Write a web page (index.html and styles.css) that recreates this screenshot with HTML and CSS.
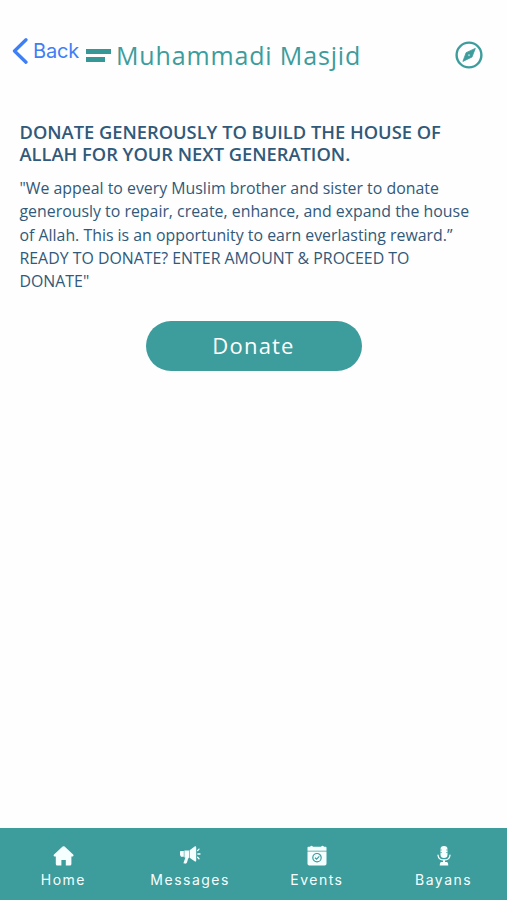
FILE: index.html
```html
<!DOCTYPE html>
<html lang="en">
<head>
  <meta charset="UTF-8">
  <meta name="viewport" content="width=device-width, initial-scale=1.0">
  <title>Donate - Muhammadi Masjid</title>
  <link rel="stylesheet" href="styles.css">
</head>
<body>
  <header class="header">
    <a class="back" href="#">
      <svg class="back-icon" width="16" height="28" viewBox="0 0 16 28"><path d="M14 2.8L2.5 14L14 25.2" fill="none" stroke="currentColor" stroke-width="3.3" stroke-linecap="round" stroke-linejoin="round"/></svg>
      <span class="back-text">Back</span>
    </a>
    <div class="menu"><span class="bar"></span><span class="bar short"></span></div>
    <h1 class="title">Muhammadi Masjid</h1>
    <svg class="compass" width="28" height="28" viewBox="0 0 28 28">
      <circle cx="14" cy="14" r="12.4" fill="none" stroke="currentColor" stroke-width="2.4"/>
      <path fill="currentColor" stroke="currentColor" stroke-width=".8" stroke-linejoin="round" fill-rule="evenodd" d="M20.3 7.4L17 16L7.9 20.4L11.1 11.7ZM14 12.9a1.2 1.2 0 1 0 0 2.4a1.2 1.2 0 1 0 0-2.4Z"/>
    </svg>
  </header>

  <main class="content">
    <h2 class="heading">DONATE GENEROUSLY TO BUILD THE HOUSE OF<br>ALLAH FOR YOUR NEXT GENERATION.</h2>
    <p class="appeal">"We appeal to every Muslim brother and sister to donate<br>generously to repair, create, enhance, and expand the house<br>of Allah. This is an opportunity to earn everlasting reward.”<br>READY TO DONATE? ENTER AMOUNT &amp; PROCEED TO<br>DONATE"</p>
    <button class="donate">Donate</button>
  </main>

  <nav class="tabs">
    <a class="tab" href="#">
      <svg width="22" height="22" viewBox="0 0 22 22"><path fill="currentColor" d="M10.6 1.6Q11.6 .8 12.6 1.6L21.4 9.7Q22 11.2 20.6 11.4H19.4V19Q19.4 20.5 17.9 20.5H13.8V15H9.4V20.5H5.3Q3.8 20.5 3.8 19V11.4H2.6Q1 11.2 1.8 9.7Z"/></svg>
      <span>Home</span>
    </a>
    <a class="tab" href="#">
      <svg width="22" height="22" viewBox="0 0 22 22">
        <path fill="currentColor" d="M1.4 6H4.8V11.7H2L1 10V7ZM5.4 5.4H10V12.5L9 14L8 17.6Q7.6 18.8 6 18.6L4.4 18.2L6.4 12.5H5.4ZM10.6 5.2L16 1.3Q17.2 1 17.2 2.3V15.7Q17.2 16.9 16 16.5L10.6 12.7Z"/>
        <path fill="none" stroke="currentColor" stroke-width="1.3" stroke-linecap="round" d="M18.6 5.6L20 4.1M18.8 9H21M18.6 12.3L20 13.7"/>
      </svg>
      <span>Messages</span>
    </a>
    <a class="tab" href="#">
      <svg width="22" height="22" viewBox="0 0 22 22">
        <path fill="currentColor" d="M1.5 2.5Q1.5 1.7 2.5 1.7H4Q5.5 0 7 1.7H15Q16.5 0 18 1.7H19.5Q20.5 1.7 20.5 2.7V5.7H1.5ZM1.5 6.4H20.5V18.7Q20.5 20.5 18.7 20.5H3.3Q1.5 20.5 1.5 18.7Z"/>
        <circle class="mark" cx="11" cy="12.7" r="4.2"/>
        <path class="mark" d="M9 12.7L10.6 14.2L13.3 11.3"/>
      </svg>
      <span>Events</span>
    </a>
    <a class="tab" href="#">
      <svg width="22" height="22" viewBox="0 0 22 22">
        <path fill="currentColor" d="M7.5 4.2Q7.5 1 11 1T14.5 4.2V9.8Q14.5 13 11 13T7.5 9.8ZM10 15H12V17.1H14Q15.3 17.5 15.3 20.4H6.7Q6.7 17.5 8 17.1H10Z"/>
        <path fill="none" stroke="currentColor" stroke-width="1.3" stroke-linecap="round" d="M5 10.2Q5.5 15 11 15T17 10.2"/>
        <path class="mark" d="M7.5 5H8.6M13.4 5H14.5M7.5 7.5H8.6M13.4 7.5H14.5"/>
      </svg>
      <span>Bayans</span>
    </a>
  </nav>
</body>
</html>
```
FILE: styles.css
```css
* {
  box-sizing: border-box;
}
body {
  margin: 0;
  height: 900px;
  display: flex;
  flex-direction: column;
  background: #fefefe;
  color: #31597a;
  font-family: "Open Sans", "Noto Sans", sans-serif;
}
a {
  text-decoration: none;
}
.header {
  display: flex;
  align-items: center;
  height: 110px;
  padding: 0 24px 0 12px;
  color: #3d9c9c;
}
.back {
  display: flex;
  align-items: center;
  gap: 5px;
  width: 74px;
  margin-bottom: 8px;
  color: #3f7ff5;
  font-family: Inter, sans-serif;
  font-size: 20px;
  letter-spacing: -0.2px;
}
.back-icon {
  flex: none;
}
.menu {
  width: 25px;
  margin-right: 5px;
}
.bar {
  display: block;
  width: 25px;
  height: 5px;
  background: #369797;
}
.short {
  width: 19px;
  margin-top: 3px;
}
.title {
  margin: 0;
  font-size: 25px;
  font-weight: 400;
  letter-spacing: 0.85px;
  white-space: nowrap;
}
.compass {
  margin-left: auto;
}
.content {
  flex: 1;
  padding: 11px 19.5px 0;
}
.heading {
  margin: 0;
  font-size: 18.3px;
  font-weight: 600;
  line-height: 22px;
  white-space: nowrap;
}
.appeal {
  margin: 12.2px 0 0;
  font-size: 15.88px;
  line-height: 23.2px;
  white-space: nowrap;
}
.donate {
  display: block;
  width: 216px;
  height: 50px;
  margin: 27.8px auto 0;
  padding: 0 0 2px;
  border: none;
  border-radius: 25px;
  background: #3d9c9c;
  color: #fff;
  font-family: inherit;
  font-size: 22px;
  line-height: 48px;
  letter-spacing: 1.2px;
}
.tabs {
  display: flex;
  height: 72px;
  background: #3d9c9c;
}
.tab {
  flex: 1;
  display: flex;
  flex-direction: column;
  align-items: center;
  padding-top: 17px;
  color: #f5ffff;
  font-family: Inter, sans-serif;
  font-size: 14px;
  line-height: 18px;
  letter-spacing: 1.5px;
}
.tab span {
  margin-top: 4px;
}
.mark {
  fill: none;
  stroke: #3d9c9c;
  stroke-width: 1.2;
}
```
